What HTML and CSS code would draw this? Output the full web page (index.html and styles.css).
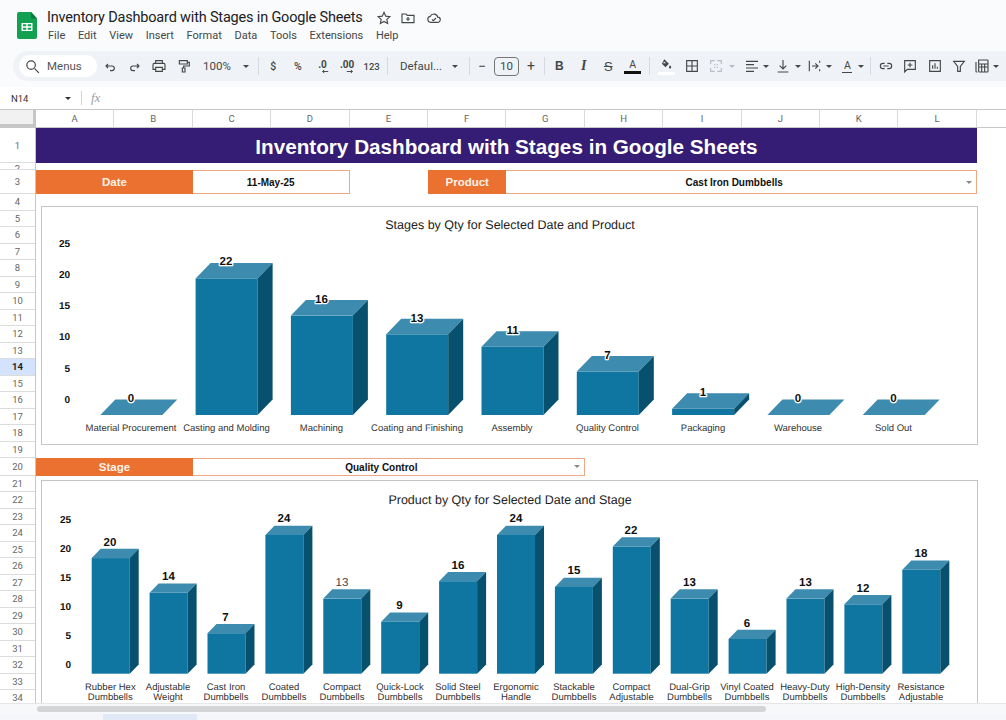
FILE: index.html
```html
<!DOCTYPE html>
<html lang="en">
<head>
<meta charset="utf-8">
<title>Inventory Dashboard with Stages in Google Sheets</title>
<link rel="stylesheet" href="styles.css">
</head>
<body>
<div class="app">
  <header class="titlebar">
    <svg class="logo" viewBox="0 0 20 27"><path class="logo-body" d="M2 0h12l6 6.500V25a2 2 0 0 1-2 2H2a2 2 0 0 1-2-2V2a2 2 0 0 1 2-2z"/><path class="logo-fold" d="M14 0l6 6.500h-4.500a1.500 1.500 0 0 1-1.500-1.500z"/><path class="logo-grid" d="M4.500 11h11v8h-11zM6 12.300v2h3.300v-2zm4.700 0v2H14v-2zM6 15.700v2h3.300v-2zm4.700 0v2H14v-2z"/></svg>
    <div class="doc">
      <div class="doc-title">
        <h1>Inventory Dashboard with Stages in Google Sheets</h1>
        <svg class="ic ic-star" viewBox="0 0 24 24"><path d="M12 3.500l2.600 5.700 6.200.7-4.600 4.200 1.300 6.100-5.500-3.100-5.500 3.100 1.300-6.100-4.600-4.200 6.200-.7z"/></svg>
        <svg class="ic ic-folder" viewBox="0 0 24 24"><path d="M3 6h6l2 2h10v11H3z"/><path d="M12 10.500v6M9 13.500h6"/></svg>
        <svg class="ic ic-cloud" viewBox="0 0 24 24"><path d="M7 18.500a4.500 4.500 0 0 1-.7-8.900 6 6 0 0 1 11.300 1.100 3.900 3.900 0 0 1-.2 7.800z"/><path d="M9 14l2 2 4-4"/></svg>
      </div>
      <nav class="menu"><span>File</span><span>Edit</span><span>View</span><span>Insert</span><span>Format</span><span>Data</span><span>Tools</span><span>Extensions</span><span>Help</span></nav>
    </div>
  </header>

  <div class="toolbar">
    <div class="search"><svg class="ic ic-17" viewBox="0 0 24 24"><circle cx="10" cy="10" r="6"/><path d="M15 15l6 6"/></svg><span>Menus</span></div>
    <div class="btn first"><svg class="ic" viewBox="0 0 24 24"><path d="M9 9l-3 3 3 3M6 12h9a3.500 3.500 0 0 1 0 7h-3"/></svg></div>
    <div class="btn"><svg class="ic" viewBox="0 0 24 24"><path d="M15 9l3 3-3 3M18 12H9a3.500 3.500 0 0 0 0 7h3"/></svg></div>
    <div class="btn"><svg class="ic" viewBox="0 0 24 24"><path d="M7 8V4h10v4M7 17H3v-7a2 2 0 0 1 2-2h14a2 2 0 0 1 2 2v7h-4M7 14h10v6H7z"/></svg></div>
    <div class="btn"><svg class="ic" viewBox="0 0 24 24"><path d="M5 4h12v5H5zM17 6.500h3V12h-8.500v3M9.500 15h4v6h-4z"/></svg></div>
    <div class="zoomsel"><span>100%</span><i class="caret"></i></div>
    <i class="sep sep-a"></i>
    <div class="num">$</div>
    <div class="num">%</div>
    <div class="num dec"><span>.0</span><svg class="dec-arrow" viewBox="0 0 10 6"><path d="M9 3H2M4 1L2 3l2 2"/></svg></div>
    <div class="num dec"><span>.00</span><svg class="dec-arrow" viewBox="0 0 10 6"><path d="M1 3h7M6 1l2 2-2 2"/></svg></div>
    <div class="num small">123</div>
    <i class="sep sep-b"></i>
    <div class="fontsel"><span>Defaul...</span><i class="caret"></i></div>
    <i class="sep sep-c"></i>
    <div class="stepper">
      <span class="step step-minus">&#8722;</span>
      <span class="size">10</span>
      <span class="step step-plus">+</span>
    </div>
    <i class="sep sep-d"></i>
    <div class="btn fmt fmt-b">B</div>
    <div class="btn fmt fmt-i">I</div>
    <div class="btn fmt fmt-s">S</div>
    <div class="btn fmt fmt-a"><span>A</span></div>
    <i class="sep sep-e"></i>
    <div class="btn fill"><svg class="ic ic-solid" viewBox="0 0 24 24"><path d="M9 2l8 8-6 6-6-6zM9 6.500L6.500 9h6z"/><path d="M19 12.500s2 2.500 2 3.700a2 2 0 0 1-4 0c0-1.200 2-3.700 2-3.700z"/></svg><i class="fill-bar"></i></div>
    <div class="btn borders"><svg class="ic" viewBox="0 0 24 24"><path d="M4 4h16v16H4zM12 4v16M4 12h16"/></svg></div>
    <div class="drop d-merge"><svg class="ic ic-off" viewBox="0 0 24 24"><path d="M4 9V4h6M14 4h6v5M4 15v5h6M14 20h6v-5M10 9v2M14 9v2M10 13v2M14 13v2" /></svg><i class="caret caret-off"></i></div>
    <div class="drop d-align"><svg class="ic" viewBox="0 0 24 24"><path d="M3 5h18M3 10h12M3 15h18M3 20h12"/></svg><i class="caret"></i></div>
    <div class="drop d-valign"><svg class="ic" viewBox="0 0 24 24"><path d="M12 3v13M7 11.500l5 5 5-5M4 21h16"/></svg><i class="caret"></i></div>
    <div class="drop d-wrap"><svg class="ic" viewBox="0 0 24 24"><path d="M5 4v16M9 12h9M14 8l4 4-4 4M20.500 4v3M20.500 17v3" /></svg><i class="caret"></i></div>
    <div class="drop d-rotate"><span class="rot"><span>A</span></span><i class="caret"></i></div>
    <i class="sep sep-f"></i>
    <div class="btn"><svg class="ic" viewBox="0 0 24 24"><path d="M10 8H7.500a4 4 0 0 0 0 8H10M14 8h2.500a4 4 0 0 1 0 8H14M8 12h8"/></svg></div>
    <div class="btn"><svg class="ic" viewBox="0 0 24 24"><path d="M4 4h16v13H8l-4 4zM12 7v7M8.500 10.500h7"/></svg></div>
    <div class="btn"><svg class="ic" viewBox="0 0 24 24"><path d="M4 4h16v16H4zM8.500 16v-5M12 16V8M15.500 16v-3"/></svg></div>
    <div class="btn"><svg class="ic" viewBox="0 0 24 24"><path d="M4 5h16l-6 7.500V20h-4v-7.500z"/></svg></div>
    <div class="drop d-table"><svg class="ic" viewBox="0 0 24 24"><path d="M3 6v14a1 1 0 0 0 1 1h1M7 3h13a1 1 0 0 1 1 1v16a1 1 0 0 1-1 1H8a1 1 0 0 1-1-1zM7 9h14M7 13.500h14M11.500 9v12M16 9v12"/></svg><i class="caret"></i></div>
  </div>

  <div class="formula">
    <span class="namebox">N14</span><i class="caret caret-name"></i><i class="formula-sep"></i><span class="fx">fx</span>
  </div>

  <div class="colhead">
    <div class="corner"></div>
    <span>A</span><span>B</span><span>C</span><span>D</span><span>E</span><span>F</span><span>G</span><span>H</span><span>I</span><span>J</span><span>K</span><span>L</span>
  </div>

  <div class="body">
    <div class="rows">
      <span class="r1">1</span><span class="r2">2</span><span class="r3">3</span><span>4</span><span>5</span><span>6</span><span>7</span><span>8</span><span>9</span><span>10</span><span>11</span><span>12</span><span>13</span><span class="active">14</span><span>15</span><span>16</span><span>17</span><span>18</span><span>19</span><span class="r20">20</span><span>21</span><span>22</span><span>23</span><span>24</span><span>25</span><span>26</span><span>27</span><span>28</span><span>29</span><span>30</span><span>31</span><span>32</span><span>33</span><span>34</span>
    </div>
    <div class="sheet">
      <div class="banner">Inventory Dashboard with Stages in Google Sheets</div>

      <div class="label date-label">Date</div>
      <div class="value date-value">11-May-25</div>
      <div class="label product-label">Product</div>
      <div class="value has-arrow product-value">Cast Iron Dumbbells<i class="arrow"></i></div>

      <div class="chart chart-one">
        <svg viewBox="42 207 935 237">
          <text class="chart-title" x="510" y="229">Stages by Qty for Selected Date and Product</text>
          <g class="axis axis-one">
            <text x="70" y="247">25</text><text x="70" y="278">20</text><text x="70" y="309">15</text><text x="70" y="340">10</text><text x="70" y="372">5</text><text x="70" y="403">0</text>
          </g>
          <g class="face-front">
            <rect x="195.600" y="278.400" width="62" height="136.600"/><rect x="290.900" y="315.600" width="62" height="99.400"/><rect x="386.200" y="334.300" width="62" height="80.700"/><rect x="481.500" y="346.700" width="62" height="68.300"/><rect x="576.800" y="371.500" width="62" height="43.500"/><rect x="672.100" y="408.800" width="62" height="6.200"/>
          </g>
          <g class="face-top">
            <polygon points="100.300,415 115.300,399.500 177.300,399.500 162.300,415"/>
            <polygon points="195.600,278.400 210.600,262.900 272.600,262.900 257.600,278.400"/>
            <polygon points="290.900,315.600 305.900,300.100 367.900,300.100 352.900,315.600"/>
            <polygon points="386.200,334.300 401.200,318.800 463.200,318.800 448.200,334.300"/>
            <polygon points="481.500,346.700 496.500,331.200 558.500,331.200 543.500,346.700"/>
            <polygon points="576.800,371.500 591.800,356 653.800,356 638.800,371.500"/>
            <polygon points="672.100,408.800 687.100,393.300 749.100,393.300 734.100,408.800"/>
            <polygon points="767.400,415 782.400,399.500 844.400,399.500 829.400,415"/>
            <polygon points="862.700,415 877.700,399.500 939.700,399.500 924.700,415"/>
          </g>
          <g class="face-side">
            <polygon points="257.600,278.400 272.600,262.900 272.600,399.500 257.600,415"/>
            <polygon points="352.900,315.600 367.900,300.100 367.900,399.500 352.900,415"/>
            <polygon points="448.200,334.300 463.200,318.800 463.200,399.500 448.200,415"/>
            <polygon points="543.500,346.700 558.500,331.200 558.500,399.500 543.500,415"/>
            <polygon points="638.800,371.500 653.800,356 653.800,399.500 638.800,415"/>
            <polygon points="734.100,408.800 749.100,393.300 749.100,399.500 734.100,415"/>
          </g>
          <g class="val halo">
            <text x="131" y="402">0</text><text x="226" y="265">22</text><text x="321.500" y="303">16</text><text x="417" y="322">13</text><text x="512.500" y="334">11</text><text x="607.500" y="359">7</text><text x="703" y="396">1</text><text x="798" y="402">0</text><text x="893.500" y="402">0</text>
          </g>
          <g class="cat">
            <text x="131" y="431">Material Procurement</text><text x="226.500" y="431">Casting and Molding</text><text x="321.500" y="431">Machining</text><text x="417" y="431">Coating and Finishing</text><text x="512" y="431">Assembly</text><text x="607.500" y="431">Quality Control</text><text x="703" y="431">Packaging</text><text x="798" y="431">Warehouse</text><text x="893.500" y="431">Sold Out</text>
          </g>
        </svg>
      </div>

      <div class="label stage-label">Stage</div>
      <div class="value has-arrow stage-value">Quality Control<i class="arrow"></i></div>

      <div class="chart chart-two">
        <svg viewBox="42 481 935 225.500">
          <text class="chart-title" x="510" y="504">Product by Qty for Selected Date and Stage</text>
          <g class="axis axis-two">
            <text x="71" y="523">25</text><text x="71" y="552">20</text><text x="71" y="581">15</text><text x="71" y="610">10</text><text x="71" y="639">5</text><text x="71" y="668">0</text>
          </g>
          <g class="face-front">
            <rect x="91.700" y="558.100" width="38" height="115.600"/><rect x="149.600" y="592.800" width="38" height="80.900"/><rect x="207.500" y="633.200" width="38" height="40.500"/><rect x="265.400" y="535" width="38" height="138.700"/><rect x="323.300" y="598.600" width="38" height="75.100"/><rect x="381.200" y="621.700" width="38" height="52"/><rect x="439.100" y="581.200" width="38" height="92.500"/><rect x="497" y="535" width="38" height="138.700"/><rect x="554.900" y="587" width="38" height="86.700"/><rect x="612.800" y="546.500" width="38" height="127.200"/><rect x="670.700" y="598.600" width="38" height="75.100"/><rect x="728.600" y="639" width="38" height="34.700"/><rect x="786.500" y="598.600" width="38" height="75.100"/><rect x="844.400" y="604.300" width="38" height="69.400"/><rect x="902.300" y="569.700" width="38" height="104"/>
          </g>
          <g class="face-top">
            <polygon points="91.700,558.100 100.700,548.800 138.700,548.800 129.700,558.100"/>
            <polygon points="149.600,592.800 158.600,583.500 196.600,583.500 187.600,592.800"/>
            <polygon points="207.500,633.200 216.500,623.900 254.500,623.900 245.500,633.200"/>
            <polygon points="265.400,535 274.400,525.700 312.400,525.700 303.400,535"/>
            <polygon points="323.300,598.600 332.300,589.300 370.300,589.300 361.300,598.600"/>
            <polygon points="381.200,621.700 390.200,612.400 428.200,612.400 419.200,621.700"/>
            <polygon points="439.100,581.200 448.100,571.900 486.100,571.900 477.100,581.200"/>
            <polygon points="497,535 506,525.700 544,525.700 535,535"/>
            <polygon points="554.900,587 563.900,577.700 601.900,577.700 592.900,587"/>
            <polygon points="612.800,546.500 621.800,537.200 659.800,537.200 650.800,546.500"/>
            <polygon points="670.700,598.600 679.700,589.300 717.700,589.300 708.700,598.600"/>
            <polygon points="728.600,639 737.600,629.700 775.600,629.700 766.600,639"/>
            <polygon points="786.500,598.600 795.500,589.300 833.500,589.300 824.500,598.600"/>
            <polygon points="844.400,604.300 853.400,595 891.400,595 882.400,604.300"/>
            <polygon points="902.300,569.700 911.300,560.400 949.300,560.400 940.300,569.700"/>
          </g>
          <g class="face-side">
            <polygon points="129.700,558.100 138.700,548.800 138.700,664.400 129.700,673.700"/>
            <polygon points="187.600,592.800 196.600,583.500 196.600,664.400 187.600,673.700"/>
            <polygon points="245.500,633.200 254.500,623.900 254.500,664.400 245.500,673.700"/>
            <polygon points="303.400,535 312.400,525.700 312.400,664.400 303.400,673.700"/>
            <polygon points="361.300,598.600 370.300,589.300 370.300,664.400 361.300,673.700"/>
            <polygon points="419.200,621.700 428.200,612.400 428.200,664.400 419.200,673.700"/>
            <polygon points="477.100,581.200 486.100,571.900 486.100,664.400 477.100,673.700"/>
            <polygon points="535,535 544,525.700 544,664.400 535,673.700"/>
            <polygon points="592.900,587 601.900,577.700 601.900,664.400 592.900,673.700"/>
            <polygon points="650.800,546.500 659.800,537.200 659.800,664.400 650.800,673.700"/>
            <polygon points="708.700,598.600 717.700,589.300 717.700,664.400 708.700,673.700"/>
            <polygon points="766.600,639 775.600,629.700 775.600,664.400 766.600,673.700"/>
            <polygon points="824.500,598.600 833.500,589.300 833.500,664.400 824.500,673.700"/>
            <polygon points="882.400,604.300 891.400,595 891.400,664.400 882.400,673.700"/>
            <polygon points="940.300,569.700 949.300,560.400 949.300,664.400 940.300,673.700"/>
          </g>
          <g class="val">
            <text x="110" y="546">20</text><text x="168.500" y="580">14</text><text x="225.500" y="620.500">7</text><text x="284" y="522">24</text><text class="val-plain" x="342" y="586">13</text><text x="399.500" y="609">9</text><text x="458" y="568.500">16</text><text x="516" y="522">24</text><text x="574" y="574">15</text><text x="631" y="534">22</text><text x="689.500" y="586">13</text><text x="747" y="626.500">6</text><text x="805.500" y="586">13</text><text x="863" y="591.500">12</text><text x="921" y="557">18</text>
          </g>
          <g class="cat">
            <text x="110.300" y="690">Rubber Hex</text><text x="110.300" y="699.500">Dumbbells</text>
            <text x="168" y="690">Adjustable</text><text x="168" y="699.500">Weight</text><text x="168" y="709.500">Dumbbells</text>
            <text x="226" y="690">Cast Iron</text><text x="226" y="699.500">Dumbbells</text>
            <text x="284" y="690">Coated</text><text x="284" y="699.500">Dumbbells</text>
            <text x="342" y="690">Compact</text><text x="342" y="699.500">Dumbbells</text>
            <text x="400" y="690">Quick-Lock</text><text x="400" y="699.500">Dumbbells</text>
            <text x="458" y="690">Solid Steel</text><text x="458" y="699.500">Dumbbells</text>
            <text x="516" y="690">Ergonomic</text><text x="516" y="699.500">Handle</text><text x="516" y="709.500">Dumbbells</text>
            <text x="574" y="690">Stackable</text><text x="574" y="699.500">Dumbbells</text>
            <text x="631.500" y="690">Compact</text><text x="631.500" y="699.500">Adjustable</text><text x="631.500" y="709.500">Dumbbells</text>
            <text x="689.500" y="690">Dual-Grip</text><text x="689.500" y="699.500">Dumbbells</text>
            <text x="747" y="690">Vinyl Coated</text><text x="747" y="699.500">Dumbbells</text>
            <text x="805" y="690">Heavy-Duty</text><text x="805" y="699.500">Dumbbells</text>
            <text x="863" y="690">High-Density</text><text x="863" y="699.500">Dumbbells</text>
            <text x="921" y="690">Resistance</text><text x="921" y="699.500">Adjustable</text><text x="921" y="709.500">Dumbbells</text>
          </g>
        </svg>
      </div>
    </div>
  </div>

  <div class="hscroll"><div class="thumb"></div></div>
  <div class="tabstrip"><div class="tab"></div></div>
</div>
</body>
</html>
```

FILE: styles.css
```css
* { box-sizing: border-box; }
html, body { margin: 0; height: 100%; overflow: hidden; background: #f9fbfd; }
body { font-family: Roboto, "Liberation Sans", sans-serif; color: #444746; }

.app { width: 1006px; height: 720px; display: flex; flex-direction: column; overflow: hidden; }

/* title bar */
.titlebar { height: 51px; flex: none; display: flex; padding: 12px 0 0 17px; gap: 10px; }
.logo { width: 20px; height: 27px; flex: none; }
.logo-body { fill: #12a150; }
.logo-fold { fill: #0b7a3b; }
.logo-grid { fill: #fff; fill-rule: evenodd; }
.doc { margin-top: -5px; }
.doc-title { display: flex; align-items: center; height: 22px; }
.doc-title h1 { margin: 0; font-size: 14.500px; letter-spacing: -0.180px; font-weight: 400; line-height: 22px; color: #202124; white-space: nowrap; }
.ic { width: 16px; height: 16px; flex: none; fill: none; stroke: #444746; stroke-width: 1.700; }
.ic-17 { width: 17px; height: 17px; }
.ic-star { margin-left: 13px; }
.ic-folder { margin-left: 8px; }
.ic-cloud { margin-left: 10px; }
.menu { display: flex; gap: 12.700px; margin-top: -1px; padding-left: 1px; font-size: 11px; line-height: 15px; color: #444746; }

/* toolbar */
.toolbar { height: 30px; flex: none; margin-left: 13px; padding-left: 6px; background: #eff3f8; border-radius: 15px 0 0 15px; display: flex; align-items: center; white-space: nowrap; font-size: 11.500px; }
.search { width: 78px; height: 22px; flex: none; background: #fff; border-radius: 11px; display: flex; align-items: center; padding-left: 5px; gap: 6px; color: #555; }
.btn { width: 24.500px; height: 22px; flex: none; display: flex; align-items: center; justify-content: center; position: relative; }
.btn.first { margin-left: 1px; }
.caret { width: 0; height: 0; flex: none; border-left: 3.500px solid transparent; border-right: 3.500px solid transparent; border-top: 3.500px solid #444746; }
.caret-off { border-top-color: #b8bcc2; }
.sep { width: 1px; height: 18px; flex: none; background: #d6dae0; }
.sep-a { margin: 0 2px 0 6px; }
.sep-b { margin: 0 8px 0 3px; }
.sep-c { margin: 0 1px 0 4px; }
.sep-d { margin: 0 2px 0 1px; }
.sep-e { margin: 0 4px; }
.sep-f { margin: 0 2px 0 4px; }
.zoomsel { width: 56px; flex: none; display: flex; align-items: center; justify-content: space-between; padding: 0 3.500px 0 7px; font-size: 11.500px; }
.num { width: 24.600px; height: 22px; flex: none; display: flex; flex-direction: column; align-items: center; justify-content: center; font-size: 10.500px; font-weight: 500; }
.num.small { font-size: 9.500px; }
.dec { font-size: 10px; line-height: 9px; font-weight: 700; padding-top: 1px; }
.dec-arrow { width: 8px; height: 5px; fill: none; stroke: #444746; stroke-width: 1.200; margin-left: 5px; }
.fontsel { width: 69px; flex: none; display: flex; align-items: center; justify-content: space-between; padding: 0 6.500px 0 4px; font-size: 11.500px; }
.stepper { display: flex; align-items: center; flex: none; }
.step { width: 22px; text-align: center; font-size: 14px; line-height: 20px; }
.step-plus { width: 24px; }
.size { width: 25px; height: 19px; margin-left: 1px; border: 1px solid #747775; border-radius: 4px; text-align: center; font-size: 11.500px; line-height: 17px; }
.fmt { font-size: 12px; color: #444746; }
.fmt-b { font-weight: 700; font-family: "Liberation Sans", sans-serif; }
.fmt-i { font-style: italic; font-weight: 700; font-family: "Liberation Serif", serif; font-size: 14px; }
.fmt-s { text-decoration: line-through; font-family: "Liberation Sans", sans-serif; font-size: 13px; }
.fmt-a span { display: block; border-bottom: 3px solid #111; width: 17px; text-align: center; line-height: 13px; font-size: 10.500px; }
.fill { flex-direction: column; }
.ic-solid { fill: #444746; stroke: none; fill-rule: evenodd; height: 14px; }
.fill-bar { width: 17px; height: 3px; background: #fff; }
.borders { margin-left: 1px; }
.ic-off { stroke: #b8bcc2; }
.drop { height: 22px; flex: none; display: flex; align-items: center; }
.d-merge { width: 36.500px; padding-left: 4px; gap: 5px; }
.d-align { width: 33px; padding-left: 4px; gap: 2.500px; }
.d-valign { width: 31px; padding-left: 2px; gap: 3.500px; }
.d-wrap { width: 32px; padding-left: 2px; gap: 3.500px; }
.d-rotate { width: 30px; padding-left: 3px; gap: 3px; }
.d-table { width: 31px; padding-left: 3px; gap: 2.500px; }
.rot { width: 16px; display: flex; justify-content: center; }
.rot span { display: block; width: 10px; border-bottom: 1.500px solid #444746; font-size: 10.500px; line-height: 12px; text-align: center; }

/* formula bar */
.formula { height: 23px; flex: none; margin-top: 6px; background: #fff; border-bottom: 1px solid #c7c7c7; display: flex; align-items: center; font-size: 9.500px; color: #333; }
.namebox { width: 65px; padding-left: 11px; }
.caret-name { border-top-color: #333; }
.formula-sep { width: 1px; height: 14px; background: #d5d5d5; margin-left: 10px; margin-right: 9px; }
.fx { font-family: "Liberation Serif", serif; font-style: italic; font-size: 13px; color: #9aa0a6; }

/* column header */
.colhead { height: 18px; flex: none; display: grid; grid-template-columns: 36px repeat(12, 78.420px) 1fr; background: #fff; font-size: 9.500px; color: #666; border-bottom: 1px solid #c7c7c7; }
.colhead span { display: flex; align-items: center; justify-content: center; border-right: 1px solid #d9d9d9; }
.corner { background: #f1f1f1; border-right: 3px solid #c6c6c6; border-bottom: 3px solid #c6c6c6; }

/* sheet */
.body { height: 575px; flex: none; display: flex; overflow: hidden; background: #fff; }
.rows { width: 36px; flex: none; display: flex; flex-direction: column; border-right: 1px solid #c7c7c7; font-size: 9.500px; color: #666; }
.rows span { height: 16.500px; flex: none; display: flex; align-items: center; justify-content: center; border-bottom: 1px solid #dcdcdc; overflow: hidden; }
.rows .r1 { height: 35px; }
.rows .r2 { height: 7px; align-items: flex-start; }
.rows .r3 { height: 24px; }
.rows .r20 { height: 17.500px; }
.rows .active { background: #d3e3fd; color: #1f1f1f; font-weight: 700; }

.sheet { flex: 1; display: grid; grid-template-columns: repeat(12, 78.420px) 1fr; grid-template-rows: 35px 7px 24px 264px 17.500px 231px; font-family: "Liberation Sans", sans-serif; }
.banner { grid-column: 1 / 13; grid-row: 1; padding-top: 3px; background: #351c75; color: #fff; font-weight: 700; font-size: 20.700px; display: flex; align-items: center; justify-content: center; }
.label { background: #ea7130; color: #fdf1e8; font-weight: 700; font-size: 11.500px; display: flex; align-items: center; justify-content: center; }
.value { position: relative; border: 1px solid #f0a884; border-left: none; color: #111; font-weight: 700; font-size: 10px; display: flex; align-items: center; justify-content: center; }
.has-arrow { padding-right: 14px; }
.date-label { grid-column: 1 / 3; grid-row: 3; }
.date-value { grid-column: 3 / 5; grid-row: 3; }
.product-label { grid-column: 6; grid-row: 3; }
.product-value { grid-column: 7 / 13; grid-row: 3; }
.stage-label { grid-column: 1 / 3; grid-row: 5; }
.stage-value { grid-column: 3 / 8; grid-row: 5; padding-top: 2px; }
.arrow { position: absolute; right: 4px; top: 50%; margin-top: -1.500px; border-left: 3.500px solid transparent; border-right: 3.500px solid transparent; border-top: 3.500px solid #888; }

.chart { grid-column: 1 / 14; margin-left: 5px; margin-right: 28px; background: #fff; border: 1px solid #c4c4c4; min-height: 0; }
.chart svg { display: block; width: 100%; height: 100%; text-rendering: geometricPrecision; }
.chart-one { grid-row: 4; margin-top: 12px; margin-bottom: 13px; }
.chart-two { grid-row: 6; margin-top: 4.500px; border-bottom: none; }
.chart-title { font-size: 12.500px; fill: #222; text-anchor: middle; }
.axis { font-size: 10px; font-weight: 700; fill: #111; text-anchor: end; }
.face-front { fill: #0f75a1; }
.face-top { fill: #3d8bae; }
.face-side { fill: #07506e; }
.val { font-size: 11.500px; font-weight: 700; fill: #111; text-anchor: middle; }
.halo { paint-order: stroke; stroke: #fff; stroke-width: 2.500px; stroke-linejoin: round; }
.val-plain { font-weight: 400; fill: #444; }
.cat { font-size: 9.500px; fill: #333; text-anchor: middle; }

/* bottom */
.hscroll { height: 11px; flex: none; background: #f7f8f9; padding: 2px 0 0 37px; border-top: 1px solid #e6e6e6; }
.thumb { width: 729px; height: 6px; border-radius: 3px; background: #d4d5d6; }
.tabstrip { height: 6px; flex: none; background: #f4f6fa; padding-left: 103px; }
.tab { width: 94px; height: 6px; background: #e1e9f7; }
```
